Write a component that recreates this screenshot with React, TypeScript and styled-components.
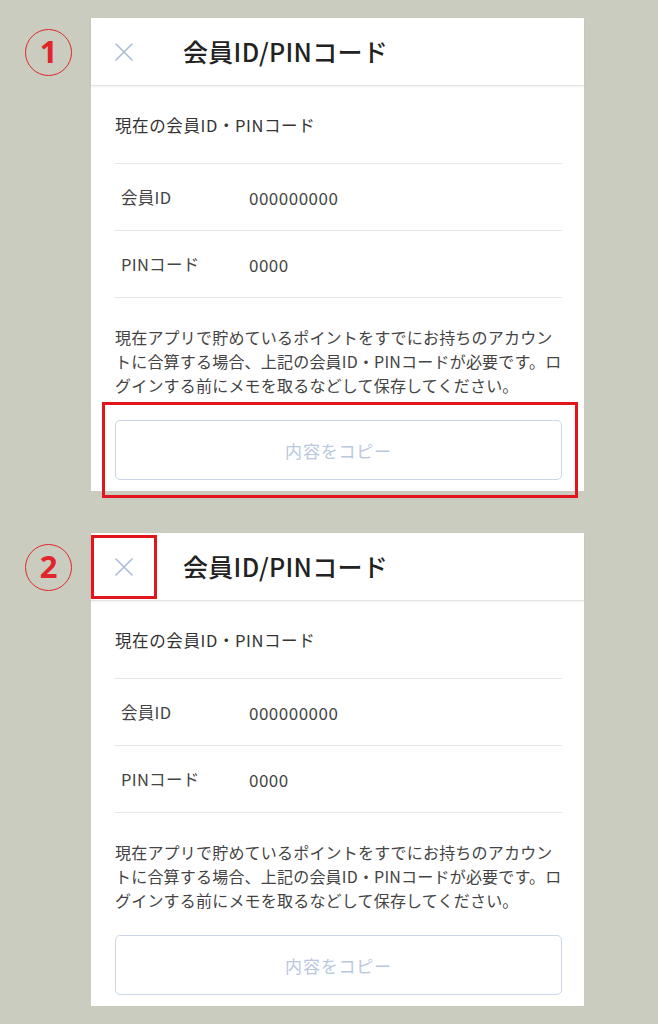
import React from 'react';
import styled, { createGlobalStyle } from 'styled-components';

const GlobalStyle = createGlobalStyle`
  body {
    margin: 0;
    background: #c9ccbe;
    font-family: "Noto Sans CJK JP", "Noto Sans", sans-serif;
  }
`;

const Page = styled.div`
  width: 658px;
  min-height: 1024px;
  padding-top: 18px;
  box-sizing: border-box;
  display: flex;
  flex-direction: column;
  gap: 42px;
`;

const Step = styled.section`
  display: grid;
  grid-template-columns: 91px 493px;
  align-items: start;
`;

const MarkerCell = styled.div`
  height: 68px;
  display: flex;
  align-items: center;
  justify-content: flex-end;
  padding-right: 19px;
`;

const StepNumber = styled.span`
  width: 47px;
  height: 47px;
  box-sizing: border-box;
  border: 1.5px solid #e2252b;
  border-radius: 50%;
  display: flex;
  align-items: center;
  justify-content: center;
  color: #e2252b;
  font-family: "Noto Sans", sans-serif;
  font-weight: 700;
  font-size: 31px;
  line-height: 1;
  padding-bottom: 2px;
`;

const Panel = styled.div`
  background: #fff;
  position: relative;
`;

const Header = styled.header`
  height: 68px;
  box-sizing: border-box;
  position: relative;
  display: flex;
  align-items: center;
  padding-left: 24px;
  border-bottom: 1px solid #e3e3e3;
  box-shadow: 0 1px 3px rgba(0, 0, 0, 0.06);
`;

const CloseButton = styled.button`
  width: 18px;
  height: 18px;
  padding: 0;
  border: none;
  background: none;
  display: flex;
  cursor: pointer;
`;

const Title = styled.h1`
  margin: 0 0 0 50px;
  font-size: 25px;
  font-weight: 500;
  color: #222;
  line-height: 1;
  letter-spacing: 0.3px;
`;

const CloseCallout = styled.div`
  position: absolute;
  left: 0;
  top: 2px;
  width: 66px;
  height: 64px;
  box-sizing: border-box;
  border: 3px solid #e1161c;
  pointer-events: none;
`;

const Body = styled.div`
  padding: 0 22px 11px 24px;
`;

const SectionTitle = styled.h2`
  margin: 0;
  padding: 27px 0 26px;
  font-size: 16.5px;
  font-weight: 400;
  line-height: 24px;
  color: #333;
  letter-spacing: 0.6px;
  border-bottom: 1px solid #e8e8e8;
`;

const InfoRow = styled.div`
  height: 66px;
  display: flex;
  align-items: center;
  padding-left: 6px;
  border-bottom: 1px solid #e8e8e8;
  font-size: 16.5px;
  color: #444;
`;

const Label = styled.span`
  width: 128px;
  letter-spacing: 0.3px;
`;

const Value = styled.span`
  font-size: 17px;
  letter-spacing: 0.5px;
`;

const Note = styled.p`
  margin: 27px 0 23px;
  font-size: 16px;
  line-height: 24px;
  color: #444;
  letter-spacing: 0.2px;
  white-space: nowrap;
`;

const CopyArea = styled.div`
  position: relative;
`;

const CopyButton = styled.button`
  width: 100%;
  height: 60px;
  box-sizing: border-box;
  border: 1.5px solid #cbd7e9;
  border-radius: 5px;
  background: #fff;
  color: #b9c8de;
  font-family: inherit;
  font-size: 17px;
  letter-spacing: 0.8px;
  cursor: pointer;
`;

const CopyCallout = styled.div`
  position: absolute;
  top: -18px;
  bottom: -18px;
  left: -13px;
  right: -16px;
  border: 3px solid #e1161c;
  pointer-events: none;
`;

const CloseIcon: React.FC = () => (
  <svg width="18" height="18" viewBox="0 0 18 18">
    <path d="M1 1L17 17M17 1L1 17" stroke="#a9bcd8" strokeWidth="1.6" strokeLinecap="round" />
  </svg>
);

type Highlight = 'copy' | 'close';

const steps: { num: string; highlight: Highlight }[] = [
  { num: '1', highlight: 'copy' },
  { num: '2', highlight: 'close' },
];

const MemberPanel: React.FC<{ highlight: Highlight }> = ({ highlight }) => (
  <Panel>
    <Header>
      <CloseButton aria-label="閉じる">
        <CloseIcon />
      </CloseButton>
      <Title>会員ID/PINコード</Title>
      {highlight === 'close' && <CloseCallout />}
    </Header>
    <Body>
      <SectionTitle>現在の会員ID・PINコード</SectionTitle>
      <InfoRow>
        <Label>会員ID</Label>
        <Value>000000000</Value>
      </InfoRow>
      <InfoRow>
        <Label>PINコード</Label>
        <Value>0000</Value>
      </InfoRow>
      <Note>
        現在アプリで貯めているポイントをすでにお持ちのアカウン
        <br />
        トに合算する場合、上記の会員ID・PINコードが必要です。ロ
        <br />
        グインする前にメモを取るなどして保存してください。
      </Note>
      <CopyArea>
        <CopyButton>内容をコピー</CopyButton>
        {highlight === 'copy' && <CopyCallout />}
      </CopyArea>
    </Body>
  </Panel>
);

const App: React.FC = () => (
  <>
    <GlobalStyle />
    <Page>
      {steps.map((step) => (
        <Step key={step.num}>
          <MarkerCell>
            <StepNumber>{step.num}</StepNumber>
          </MarkerCell>
          <MemberPanel highlight={step.highlight} />
        </Step>
      ))}
    </Page>
  </>
);

export default App;
